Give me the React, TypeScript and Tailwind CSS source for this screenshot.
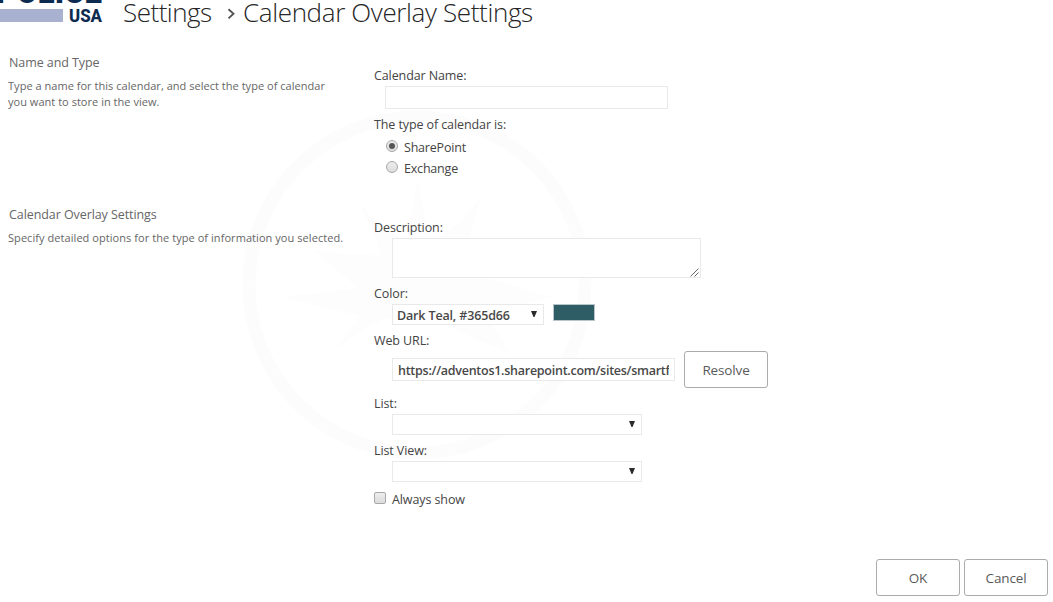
import type { ReactNode } from "react";

function Label({ children, className = "" }: { children: ReactNode; className?: string }) {
  return (
    <div className={`h-[18px] pt-px text-[12.5px] leading-[18px] tracking-[-0.1px] whitespace-nowrap text-[#444] ${className}`}>
      {children}
    </div>
  );
}

function Section({ title, text, className = "", children }: { title: string; text: ReactNode; className?: string; children: ReactNode }) {
  return (
    <section className={`flex ${className}`}>
      <div className="w-[374px] shrink-0 pt-px pl-2 text-[#666]">
        <h2 className="pl-px text-[12.5px] leading-[18px] tracking-[-0.08px]">{title}</h2>
        <p className="mt-1.5 text-[11px] leading-4 tracking-[0.03px] whitespace-nowrap">{text}</p>
      </div>
      <div className="flex flex-1 flex-col items-start pt-[13px]">{children}</div>
    </section>
  );
}

function SelectBox({ value, className }: { value: string; className: string }) {
  return (
    <div className={`flex h-[21px] items-center justify-between border border-[#e9e9e9] bg-white pr-[6px] pl-1 text-[12.5px] leading-[19px] font-semibold tracking-[-0.15px] text-[#484848] ${className}`}>
      <span className="pt-0.5 whitespace-nowrap">{value}</span>
      <svg width="6" height="6" viewBox="0 0 6 6" className="-mt-px shrink-0">
        <path d="M0 0H6L3.5 6H2.5Z" fill="#2b2b2b" />
      </svg>
    </div>
  );
}

function Radio({ label, checked, className }: { label: string; checked?: boolean; className: string }) {
  return (
    <label className={`ml-3 flex h-[18px] ${className}`}>
      <span className="mt-0.5 flex size-3 shrink-0 items-center justify-center rounded-full border border-[#a9a9a9] bg-linear-to-b from-[#ededed] to-[#dcdcdc]">
        {checked && <span className="size-1.5 rounded-full bg-[#555]" />}
      </span>
      <Label className="ml-[6px] tracking-[-0.2px]">{label}</Label>
    </label>
  );
}

function Button({ children }: { children: ReactNode }) {
  return (
    <button className="h-[37px] w-[84px] rounded-[3px] border border-[#ababab] bg-white pt-0.5 text-[13.5px] tracking-[-0.15px] text-[#5a5a5a]">
      {children}
    </button>
  );
}

function Watermark() {
  return (
    <svg className="pointer-events-none absolute top-[108px] left-[240px]" width="354" height="354" viewBox="0 0 354 354">
      <circle cx="177" cy="177" r="168" fill="none" stroke="#fcfcfc" strokeWidth="13" />
      <path
        d="M178 70L188 133C210 126 228 108 241 88C234 115 230 130 226 142L272 141L240 168L312 189L244 205C252 215 260 228 270 246C240 232 215 224 206 212L177 201C145 210 120 218 94 245L120 208L43 189L118 180L74 143L142 148C137 130 126 108 115 88C130 110 145 125 167 133Z"
        fill="#fdfdfd"
      />
    </svg>
  );
}

export default function App() {
  return (
    <div className="relative h-[602px] w-[1053px] overflow-hidden bg-white font-['Open_Sans','Noto_Sans',sans-serif]">
      <Watermark />
      <div className="relative">
        <header className="flex h-[53px] items-start">
          <svg width="123" height="30" viewBox="0 0 123 30" className="shrink-0">
            <text x="-4" y="3" fontFamily="Roboto" fontWeight="900" fontSize="33" textLength="106" lengthAdjust="spacingAndGlyphs" fill="#0d2b50">POLICE</text>
            <rect x="0" y="9" width="63" height="13" fill="#a9b1d1" />
            <text x="69" y="22" fontFamily="Roboto" fontWeight="800" fontSize="18" textLength="33" lengthAdjust="spacingAndGlyphs" fill="#0d2b50">USA</text>
          </svg>
          <h1 className="flex text-[26px] leading-6 font-light tracking-[-0.36px] whitespace-nowrap text-[#262626]">
            <span className="w-[104px] tracking-[-0.5px]">Settings</span>
            <svg width="9" height="12" viewBox="0 0 9 12" className="mt-2 mr-[7px]">
              <path d="M1.5 1.2L6.5 5.8L1.5 10.4" fill="none" stroke="#555" strokeWidth="1.9" />
            </svg>
            <span>Calendar Overlay Settings</span>
          </h1>
        </header>

        <Section
          className="h-[152px]"
          title="Name and Type"
          text={<>Type a name for this calendar, and select the type of calendar<br />you want to store in the view.</>}
        >
          <Label>Calendar Name:</Label>
          <input className="mt-0.5 ml-[11px] h-[23px] w-[283px] border border-[#e9e9e9] bg-white" />
          <Label className="mt-1.5">The type of calendar is:</Label>
          <Radio className="mt-[5px]" label="SharePoint" checked />
          <Radio className="mt-[3px]" label="Exchange" />
        </Section>

        <Section title="Calendar Overlay Settings" text={<span className="tracking-[0.06px]">Specify detailed options for the type of information you selected.</span>}>
          <Label>Description:</Label>
          <div className="mt-0.5 ml-[18px] flex h-10 w-[309px] items-end justify-end border border-[#e9e9e9] bg-white pr-px">
            <svg width="9" height="9" viewBox="0 0 9 9">
              <path d="M0.5 8.5L8.5 0.5M4.5 8.5L8.5 4.5" stroke="#555" strokeWidth="0.9" />
            </svg>
          </div>
          <Label className="mt-1.5">Color:</Label>
          <div className="mt-0.5 ml-[18px] flex">
            <SelectBox className="w-[152px]" value="Dark Teal, #365d66" />
            <div className="ml-[9px] h-[17px] w-[42px] border border-[#b9c6c9] bg-[#2f5d65]" />
          </div>
          <Label className="mt-1.5">Web URL:</Label>
          <div className="mt-0.5 ml-[18px] flex items-center gap-[9px]">
            <div className="h-[23px] w-[283px] border border-[#e9e9e9] bg-white px-[5px]">
              <div className="overflow-hidden pt-px text-[12.5px] leading-[21px] font-semibold tracking-[-0.26px] whitespace-nowrap text-[#484848]">
                https://adventos1.sharepoint.com/sites/smartf
              </div>
            </div>
            <Button>Resolve</Button>
          </div>
          <Label className="mt-1.5">List:</Label>
          <SelectBox className="mt-0.5 ml-[18px] w-[250px]" value="" />
          <Label className="mt-1.5">List View:</Label>
          <SelectBox className="mt-0.5 ml-[18px] w-[250px]" value="" />
          <label className="mt-2 flex">
            <span className="mt-0.5 size-3 rounded-[2px] border border-[#a8a8a8] bg-linear-to-b from-[#ededed] to-[#dcdcdc]" />
            <Label className="ml-1.5">Always show</Label>
          </label>
        </Section>

        <footer className="mt-[51px] flex justify-end gap-1 pr-[5px]">
          <Button>OK</Button>
          <Button>Cancel</Button>
        </footer>
      </div>
    </div>
  );
}
